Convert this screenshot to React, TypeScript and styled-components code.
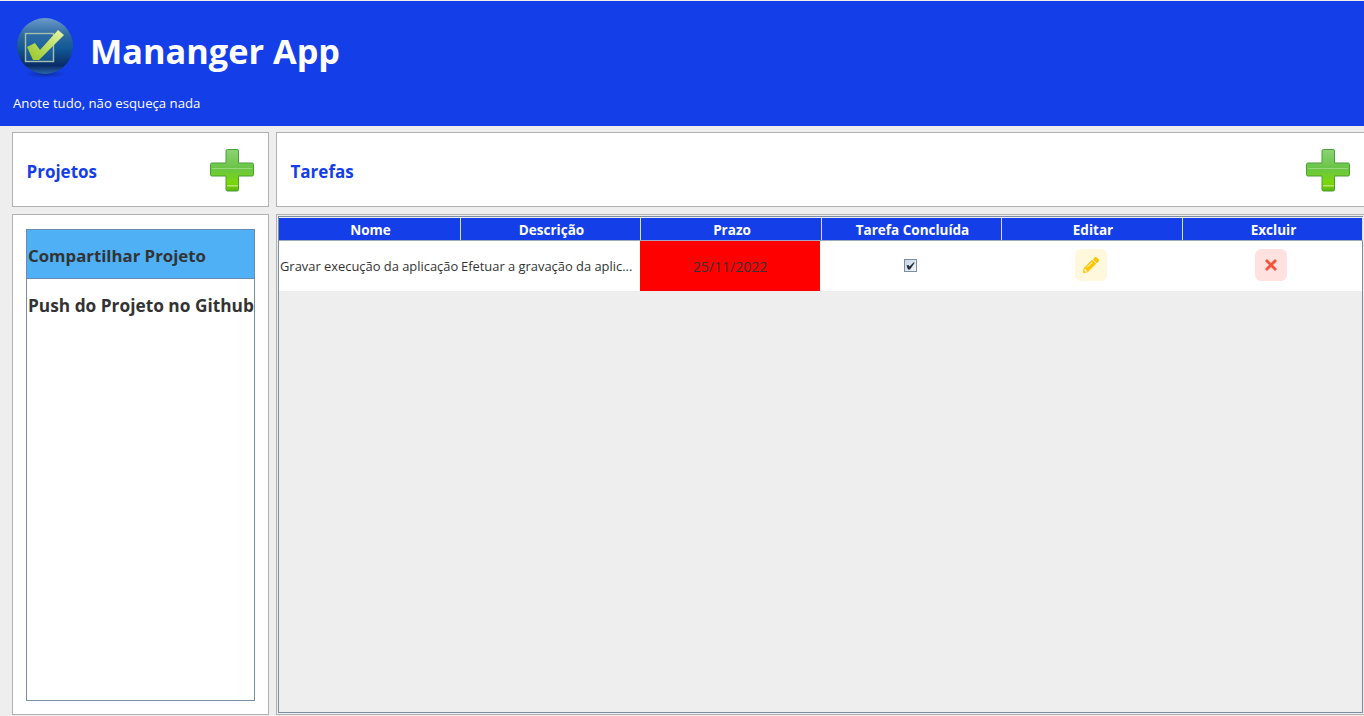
import React from "react";
import styled, { createGlobalStyle } from "styled-components";
import { X } from "lucide-react";
import { FaPencilAlt } from "react-icons/fa";

const GlobalStyle = createGlobalStyle`
  html, body {
    margin: 0;
    padding: 0;
    background: #eeeeee;
    overflow: hidden;
  }
  * { box-sizing: border-box; }
`;

const columns = ["Nome", "Descrição", "Prazo", "Tarefa Concluída", "Editar", "Excluir"];

function AppIcon() {
  return (
    <svg width="64" height="64" viewBox="0 0 64 64">
      <defs>
        <linearGradient id="sphere" x1="0" y1="0" x2="0" y2="1">
          <stop offset="0" stopColor="#6a9bcc" />
          <stop offset="0.3" stopColor="#2f6a9e" />
          <stop offset="0.55" stopColor="#125796" />
          <stop offset="0.85" stopColor="#0a2c66" />
          <stop offset="1" stopColor="#2a68a6" />
        </linearGradient>
        <linearGradient id="check" x1="1" y1="0" x2="0" y2="1">
          <stop offset="0" stopColor="#e8f5a8" />
          <stop offset="1" stopColor="#92c522" />
        </linearGradient>
        <radialGradient id="shadow">
          <stop offset="0" stopColor="#0a2a8a" stopOpacity="0.8" />
          <stop offset="1" stopColor="#0a2a8a" stopOpacity="0" />
        </radialGradient>
      </defs>
      <ellipse cx="32" cy="59" rx="20" ry="4" fill="url(#shadow)" />
      <circle cx="32" cy="31" r="28" fill="url(#sphere)" />
      <rect x="12.500" y="18.500" width="28" height="28" fill="#2a6ea6" fillOpacity="0.45" stroke="#a3c0b0" strokeWidth="1.400" />
      <path d="M14 32 L22 28 L27 35 L45 15 L51 20 L26 45 L20 45 Z" fill="url(#check)" />
    </svg>
  );
}

function PlusIcon() {
  return (
    <svg width="44" height="43" viewBox="0 0 44 43">
      <defs>
        <linearGradient id="plusV" x1="0" y1="0" x2="0" y2="1">
          <stop offset="0" stopColor="#8dd373" />
          <stop offset="0.45" stopColor="#69c447" />
          <stop offset="0.8" stopColor="#7cd80a" />
          <stop offset="1" stopColor="#5cb80a" />
        </linearGradient>
      </defs>
      <path
        d="M17.500 0.500 H27 Q28.500 0.500 28.500 2 V14 H42 Q43.500 14 43.500 15.500 V25.500 Q43.500 27 42 27 H28.500 V40.500 Q28.500 42 27 42 H17.500 Q16 42 16 40.500 V27 H2 Q0.500 27 0.500 25.500 V15.500 Q0.500 14 2 14 H16 V2 Q16 0.500 17.500 0.500 Z"
        fill="url(#plusV)"
        stroke="#46a035"
      />
      <rect x="2" y="19" width="40" height="1" fill="#c5eeb0" opacity="0.5" />
      <rect x="17" y="36" width="11" height="1.500" fill="#e2f8b0" opacity="0.6" />
    </svg>
  );
}

function TickMark() {
  return (
    <svg width="9" height="9" viewBox="0 0 9 9">
      <path d="M0.500 4.500 L2.500 4 L3.500 5.500 L8 1 L8.500 2 L4 8.500 L2 8.500 Z" fill="#222c38" />
    </svg>
  );
}

export default function App() {
  return (
    <Page>
      <GlobalStyle />
      <Header>
        <Brand>
          <AppIcon />
          <Title>Mananger App</Title>
        </Brand>
        <Subtitle>Anote tudo, não esqueça nada</Subtitle>
      </Header>
      <Body>
        <SideColumn>
          <ToolbarPanel>
            <PanelTitle>Projetos</PanelTitle>
            <PlusIcon />
          </ToolbarPanel>
          <ListPanel>
            <ProjectList>
              <ProjectItem $selected>Compartilhar Projeto</ProjectItem>
              <ProjectItem>Push do Projeto no Github</ProjectItem>
            </ProjectList>
          </ListPanel>
        </SideColumn>
        <MainColumn>
          <ToolbarPanel>
            <PanelTitle>Tarefas</PanelTitle>
            <PlusIcon />
          </ToolbarPanel>
          <TablePanel>
            <TableBorder>
              <HeadRow>
                {columns.map((name) => (
                  <HeadCell key={name}>{name}</HeadCell>
                ))}
              </HeadRow>
              <DataRow>
                <TextCell>Gravar execução da aplicação</TextCell>
                <TextCell>Efetuar a gravação da aplic...</TextCell>
                <DateCell>25/11/2022</DateCell>
                <CenterCell>
                  <CheckBox>
                    <TickMark />
                  </CheckBox>
                </CenterCell>
                <CenterCell>
                  <ActionButton $bg="#fff8dc" $right={1}>
                    <FaPencilAlt size={16} color="#ffc400" />
                  </ActionButton>
                </CenterCell>
                <CenterCell>
                  <ActionButton $bg="#ffe2df" $right={2}>
                    <X size={20} color="#f4533c" strokeWidth={3.5} strokeLinecap="butt" />
                  </ActionButton>
                </CenterCell>
              </DataRow>
            </TableBorder>
          </TablePanel>
        </MainColumn>
      </Body>
    </Page>
  );
}

const Page = styled.div`
  width: 1364px;
  height: 716px;
  display: flex;
  flex-direction: column;
  overflow: hidden;
  background: #eeeeee;
  font-family: "Open Sans", "Noto Sans", sans-serif;
`;

const Header = styled.header`
  height: 125px;
  margin-top: 1px;
  flex: none;
  padding: 14px 0 0 13px;
  background: #143ee8;
  color: #ffffff;
`;

const Brand = styled.div`
  display: flex;
  align-items: flex-start;
  gap: 13px;
`;

const Title = styled.h1`
  margin: 13px 0 0;
  font-size: 34.300px;
  font-weight: 700;
  line-height: 46px;
`;

const Subtitle = styled.div`
  margin-top: 15px;
  font-size: 13.200px;
  line-height: 18px;
`;

const Body = styled.main`
  flex: 1;
  display: flex;
  gap: 7px;
  padding: 6px 0 0 12px;
  min-height: 0;
`;

const SideColumn = styled.section`
  width: 257px;
  flex: none;
  display: flex;
  flex-direction: column;
  gap: 7px;
`;

const MainColumn = styled.section`
  width: 1089px;
  flex: none;
  display: flex;
  flex-direction: column;
  gap: 7px;
`;

const ToolbarPanel = styled.div`
  height: 75px;
  flex: none;
  display: flex;
  align-items: center;
  justify-content: space-between;
  padding: 2px 14px 0 13.500px;
  background: #ffffff;
  border: 1px solid #b1b1b1;
`;

const PanelTitle = styled.h2`
  margin: 2px 0 0;
  font-size: 17px;
  font-weight: 700;
  color: #143ee8;
`;

const ListPanel = styled.div`
  height: 501px;
  flex: none;
  padding: 14px 13px 13px 13px;
  background: #ffffff;
  border: 1px solid #b1b1b1;
`;

const ProjectList = styled.div`
  height: 100%;
  border: 1px solid #7a8fa3;
`;

const ProjectItem = styled.div<{ $selected?: boolean }>`
  height: 50px;
  display: flex;
  align-items: center;
  padding: 2px 0 0 1px;
  white-space: nowrap;
  font-size: ${(p) => (p.$selected ? "16.800px" : "17.300px")};
  font-weight: 700;
  color: #333333;
  background: ${(p) => (p.$selected ? "#4fb0f6" : "transparent")};
  border: ${(p) => (p.$selected ? "1px solid #6a8ab5" : "none")};
  margin: ${(p) => (p.$selected ? "-1px -1px 0 -1px" : "0")};
`;

const TablePanel = styled.div`
  height: 501px;
  flex: none;
  padding: 1px;
  border: 1px solid #b1b1b1;
`;

const TableBorder = styled.div`
  height: 100%;
  border: 1px solid #7a8fa3;
`;

const HeadRow = styled.div`
  height: 24px;
  width: 1084px;
  display: grid;
  grid-template-columns: 182px 180px 181px 180px 181px 180px;
  background: #143ee8;
  border-top: 1px solid #eeeeee;
  border-bottom: 1px solid #9fa9bd;
`;

const HeadCell = styled.div`
  display: flex;
  align-items: center;
  justify-content: center;
  padding: 1px 0 0 2px;
  border-right: 1px solid #d8dde8;
  font-size: 13.500px;
  font-weight: 700;
  color: #ffffff;
`;

const DataRow = styled.div`
  height: 50px;
  width: 1083px;
  display: grid;
  grid-template-columns: 181px 180px 180px 181px 181px 180px;
  background: #ffffff;
`;

const TextCell = styled.div`
  display: flex;
  align-items: center;
  padding-left: 1px;
  white-space: nowrap;
  overflow: hidden;
  font-size: 12.900px;
  color: #333333;
`;

const DateCell = styled.div`
  display: flex;
  align-items: center;
  justify-content: center;
  background: #ff0000;
  font-size: 14px;
  color: #333333;
`;

const CenterCell = styled.div`
  display: flex;
  align-items: center;
  justify-content: center;
`;

const CheckBox = styled.span`
  width: 13px;
  height: 13px;
  margin-bottom: 1px;
  display: flex;
  align-items: center;
  justify-content: center;
  background: linear-gradient(135deg, #c6d4e2, #f4f7fa);
  border: 1px solid #7a8fa3;
`;

const ActionButton = styled.span<{ $bg: string; $right: number }>`
  width: 32px;
  height: 32px;
  margin: 0 ${(p) => p.$right}px 2px 0;
  display: flex;
  align-items: center;
  justify-content: center;
  border-radius: 6px;
  background: ${(p) => p.$bg};
`;
